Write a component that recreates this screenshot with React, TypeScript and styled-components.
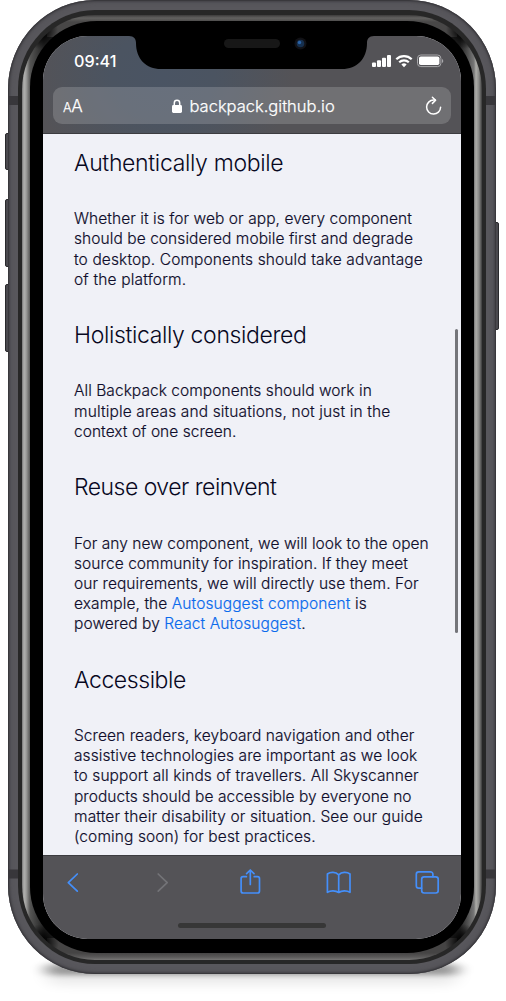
import React from 'react';
import styled, { createGlobalStyle } from 'styled-components';

const Global = createGlobalStyle`
  * { box-sizing: border-box; }
  body { margin: 0; background: #fff; font-family: Inter, "Liberation Sans", sans-serif; }
`;

const Stage = styled.main`
  isolation: isolate;
  width: 506px;
  height: 1001px;
  padding: 0 10px 27px 8px;
  overflow: hidden;
  background: #fff;
`;

const Frame = styled.div`
  position: relative;
  width: 488px;
  height: 974px;
  padding: 10px;
  border-radius: 87px / 89px;
  background: #58575c;
  box-shadow: inset 0 0 2px 1px #333236, inset 0 0 5px 1px #47464b;
`;

const Chassis = styled.svg`
  position: absolute;
  inset: 0;
  overflow: visible;
`;

const Ground = styled(Chassis)`
  z-index: -1;
`;

const Rim = styled.div`
  position: relative;
  height: 954px;
  padding: 5px 4px 4px;
  border-radius: 77px / 79px;
  background: #272727;
`;

const Glass = styled.div`
  height: 945px;
  padding: 6px 8px 7px;
  border-radius: 73px / 75px;
  background:
    radial-gradient(circle at 17px 15px, #000 5px, transparent 19px),
    radial-gradient(circle at calc(100% - 17px) 15px, #000 5px, transparent 19px),
    radial-gradient(circle at 19px calc(100% - 18px), #000 3px, transparent 18px),
    radial-gradient(circle at calc(100% - 19px) calc(100% - 18px), #000 3px, transparent 18px),
    linear-gradient(#3c3b3b, #626160 3px, #484747 7px) 50% 0 / calc(100% - 50px) 22px no-repeat,
    linear-gradient(0deg, #777675, #5a5959 3px, #454444 7px) 50% 100% / calc(100% - 50px) 22px no-repeat,
    linear-gradient(90deg, #777 0, #b0b0ae 2px, #a0a09e 4px, #565655 8px, #222 22px, #222 calc(100% - 22px), #777 calc(100% - 8px), #adada9 calc(100% - 6px), #888886 calc(100% - 3px), #3a3a3a 100%);
`;

const Bezel = styled.div`
  height: 932px;
  padding: 15px 13px 14px;
  border-radius: 67px / 66px;
  background: #000;
`;

const Screen = styled.div`
  position: relative;
  display: flex;
  flex-direction: column;
  width: 418px;
  height: 903px;
  overflow: hidden;
  border-radius: 45px;
  background: #f0f1f7;
`;

const Header = styled.header`
  flex: none;
  height: 98px;
  padding: 0 10px 9px;
  display: flex;
  flex-direction: column;
  border-bottom: 1px solid #3c3c40;
  background:
    radial-gradient(ellipse 130px 110px at 120px 40px, #4a5463 0, #4b5461 40%, rgba(84, 83, 87, 0) 100%),
    #545357;
`;

const StatusBar = styled.div`
  display: flex;
  justify-content: space-between;
  height: 52px;
  padding: 14px 6px 0 21px;
`;

const Clock = styled.time`
  font-size: 16.2px;
  line-height: 22px;
  font-weight: 550;
  color: #fff;
`;

const Notch = styled.svg`
  position: absolute;
  left: 85px;
  top: -1px;
`;

const AddressBar = styled.div`
  display: flex;
  align-items: center;
  height: 37px;
  flex: none;
  padding: 0 9px 0 10px;
  border-radius: 9px;
  background: rgba(255, 255, 255, 0.17);
  color: #fff;
  font-weight: 300;
  -webkit-text-stroke: 0.25px currentColor;
`;

const TextSize = styled.span`
  width: 109px;
  padding-top: 1px;
  font-size: 17px;
  letter-spacing: -0.2px;
  small { font-size: 12.7px; }
`;

const Host = styled.span`
  flex: 1;
  padding: 1px 0 0 7.5px;
  font-size: 16.5px;
  white-space: nowrap;
`;

const Article = styled.article`
  flex: 1;
  min-height: 0;
  overflow: hidden;
  padding: 13px 0 0 31px;
`;

const Heading = styled.h2<{ $track: number }>`
  margin: 0;
  height: 32px;
  font-size: 23px;
  line-height: 32px;
  font-weight: 300;
  letter-spacing: ${p => p.$track}px;
  color: #08081f;
`;

const Paragraph = styled.p`
  margin: 30.2px 0 29.3px;
  font-size: 15.5px;
  line-height: 20.2px;
  color: #0f0d2b;
  font-weight: 300;
  -webkit-text-stroke: 0.18px currentColor;
`;

const Line = styled.span<{ $track: number }>`
  display: block;
  white-space: nowrap;
  letter-spacing: ${p => p.$track}px;
`;

const Link = styled.a`
  color: #0a6aec;
`;

const ScrollThumb = styled.i`
  position: absolute;
  right: 3px;
  top: 293px;
  width: 3px;
  height: 304px;
  border-radius: 2px;
  background: #74757a;
`;

const Toolbar = styled.footer`
  flex: none;
  height: 84px;
  padding: 11px 0;
  display: flex;
  flex-direction: column;
  justify-content: space-between;
  align-items: center;
  border-top: 1px solid #3c3c40;
  background: #545357;
`;

const Actions = styled.nav`
  align-self: stretch;
  display: flex;
  justify-content: space-between;
  padding: 0 21px 0 18px;
`;

const ActionIcon = styled.svg<{ $muted?: boolean }>`
  flex: none;
  height: 32px;
  overflow: visible;
  fill: none;
  stroke: ${p => (p.$muted ? '#737377' : '#448ffa')};
  stroke-width: 1.7;
  stroke-linecap: round;
  stroke-linejoin: round;
`;

const HomeBar = styled.i`
  width: 148px;
  height: 5px;
  border-radius: 3px;
  background: #373737;
`;

type TextLine = [React.ReactNode, number];
const sections: { title: string; track: number; lines: TextLine[] }[] = [
  {
    title: 'Authentically mobile', track: -0.33,
    lines: [
      ['Whether it is for web or app, every component', 0.065],
      ['should be considered mobile first and degrade', 0.07],
      ['to desktop. Components should take advantage', 0.12],
      ['of the platform.', 0.18],
    ],
  },
  {
    title: 'Holistically considered', track: -0.36,
    lines: [
      ['All Backpack components should work in', 0.05],
      ['multiple areas and situations, not just in the', 0.13],
      ['context of one screen.', 0.04],
    ],
  },
  {
    title: 'Reuse over reinvent', track: -0.52,
    lines: [
      ['For any new component, we will look to the open', 0.035],
      ['source community for inspiration. If they meet', 0.07],
      ['our requirements, we will directly use them. For', 0.07],
      [<>example, the <Link>Autosuggest component</Link> is</>, 0.09],
      [<>powered by <Link>React Autosuggest</Link>.</>, 0.07],
    ],
  },
  {
    title: 'Accessible', track: -0.42,
    lines: [
      ['Screen readers, keyboard navigation and other', 0.065],
      ['assistive technologies are important as we look', 0.08],
      ['to support all kinds of travellers. All Skyscanner', 0.085],
      ['products should be accessible by everyone no', 0.035],
      ['matter their disability or situation. See our guide', 0.12],
      ['(coming soon) for best practices.', 0.11],
    ],
  },
];

const sideKeys = [
  { x: -2.5, y: 133, h: 37 },
  { x: -2.5, y: 199, h: 68 },
  { x: -2.5, y: 284, h: 68 },
  { x: 485.5, y: 222, h: 108 },
];

const PhoneBack = () => (
  <Ground width="488" height="974">
    <defs>
      <filter id="soft" x="-10%" y="-150%" width="120%" height="400%"><feGaussianBlur stdDeviation="8 2.5" /></filter>
      <filter id="haze" x="-10%" y="-150%" width="120%" height="400%"><feGaussianBlur stdDeviation="9 6" /></filter>
    </defs>
    <rect x="38" y="964" width="412" height="20" rx="10" fill="#000" opacity="0.09" filter="url(#haze)" />
    <rect x="38" y="964" width="412" height="11" rx="5" fill="#000" opacity="0.34" filter="url(#soft)" />
    {sideKeys.map(k => (
      <rect key={k.y} x={k.x} y={k.y + 0.5} width="5" height={k.h - 1} rx="1.5" fill="#4a494e" stroke="#29292c" />
    ))}
  </Ground>
);

const AntennaBands = () => (
  <Chassis width="488" height="974" fill="#38373b">
    <path d="M0 96h10v9H0zM478 96h10v9h-10zM0 869.5h10v9H0zM478 869.5h10v9h-10z" />
  </Chassis>
);

const StatusIcons = () => (
  <svg width="74" height="22" viewBox="0 0 74 22" fill="#fff">
    <rect x="1" y="12.5" width="4" height="4.5" rx="1" />
    <rect x="6" y="10.3" width="4" height="6.7" rx="1" />
    <rect x="11" y="7.7" width="4" height="9.3" rx="1" />
    <rect x="16" y="5" width="4" height="12" rx="1" />
    <g fill="none" stroke="#fff" strokeWidth="2.2">
      <path d="M25.3 9.3a11 11 0 0 1 15.4 0" />
      <path d="M28.2 12.3a7 7 0 0 1 9.6 0" />
    </g>
    <path d="M33 17.2l-2.6-2.7a3.8 3.8 0 0 1 5.2 0z" />
    <rect x="46.5" y="5" width="23.4" height="11.6" rx="3.3" fill="none" stroke="#a8a8ab" />
    <rect x="48" y="6.5" width="20.4" height="8.6" rx="1.8" />
    <path d="M71 9v4a2.2 2.2 0 0 0 0-4z" fill="#a8a8ab" />
  </svg>
);

export default function App() {
  return (
    <Stage>
      <Global />
      <Frame>
        <PhoneBack />
        <AntennaBands />
        <Rim>
          <Glass>
            <Bezel>
              <Screen>
                <Header>
                  <StatusBar>
                    <Clock>09:41</Clock>
                    <StatusIcons />
                  </StatusBar>
                  <AddressBar>
                    <TextSize><small>A</small>A</TextSize>
                    <svg width="10" height="14" viewBox="0 0 10 14">
                      <path d="M2.3 7V4a2.7 2.7 0 0 1 5.4 0v3" fill="none" stroke="#fff" strokeWidth="1.5" />
                      <rect y="6" width="10" height="8" rx="1.4" fill="#fff" />
                    </svg>
                    <Host>backpack.github.io</Host>
                    <svg width="17" height="20" viewBox="0 0 17 20" fill="none" stroke="#fff" strokeWidth="1.5" strokeLinecap="round" strokeLinejoin="round">
                      <path d="M15.6 11.3a7 7 0 1 1-7-7.2h1.6" />
                      <path d="M7.4 1.2l3.2 3-3.2 3.2" />
                    </svg>
                  </AddressBar>
                </Header>
                <Article>
                  {sections.map(s => (
                    <section key={s.title}>
                      <Heading $track={s.track}>{s.title}</Heading>
                      <Paragraph>
                        {s.lines.map(([text, track], i) => <Line key={i} $track={track}>{text}</Line>)}
                      </Paragraph>
                    </section>
                  ))}
                </Article>
                <Toolbar>
                  <Actions>
                    <ActionIcon width="24" viewBox="0 0 24 32">
                      <path d="M16.3 7L7.3 15.6l9 8.6" />
                    </ActionIcon>
                    <ActionIcon $muted width="24" viewBox="-1.5 0 24 32">
                      <path d="M7.7 7l9 8.6-9 8.6" />
                    </ActionIcon>
                    <ActionIcon width="24" viewBox="-0.9 0 24 32">
                      <path d="M8.5 9.7H5.2a2 2 0 0 0-2 2V24a2 2 0 0 0 2 2h14.4a2 2 0 0 0 2-2V11.7a2 2 0 0 0-2-2h-3.3M12.4 17.5V3.2M8.7 6.6l3.7-3.6 3.7 3.6" />
                    </ActionIcon>
                    <ActionIcon width="26" viewBox="-1.7 0 26 32">
                      <path d="M13 7.8C10 4.8 4.8 4.7 1.7 7v18.300c3-2 8.300-2 11.300.2 3-2.200 8.300-2.200 11.300-.2V7C21.200 4.700 16 4.800 13 7.800zM13 7.800v17.700" />
                    </ActionIcon>
                    <ActionIcon width="26" viewBox="0 0 26 32">
                      <rect x="7.7" y="9.8" width="16.5" height="16.2" rx="2.4" />
                      <path d="M7.5 21.2H4.7a2.4 2.4 0 0 1-2.4-2.4V7.2a2.4 2.4 0 0 1 2.4-2.4h11.800a2.400 2.400 0 0 1 2.400 2.400v2.400" />
                    </ActionIcon>
                  </Actions>
                  <HomeBar />
                </Toolbar>
                <ScrollThumb />
                <Notch width="248" height="35" viewBox="0 0 248 35">
                  <path d="M0 0H248V1H246C241 1 239 4 239 8C239 24 229 34 214 34H33C18 34 8 24 8 8C8 4 6 1 1 1H0Z" fill="#000" />
                  <rect x="96" y="4" width="56" height="9" rx="4.5" fill="#171717" />
                  <circle cx="172.5" cy="8.5" r="6" fill="#111115" />
                  <circle cx="172.5" cy="8.5" r="3.8" fill="#16304f" />
                  <circle cx="171.5" cy="7.5" r="1.7" fill="#2a63a8" />
                </Notch>
              </Screen>
            </Bezel>
          </Glass>
        </Rim>
      </Frame>
    </Stage>
  );
}
